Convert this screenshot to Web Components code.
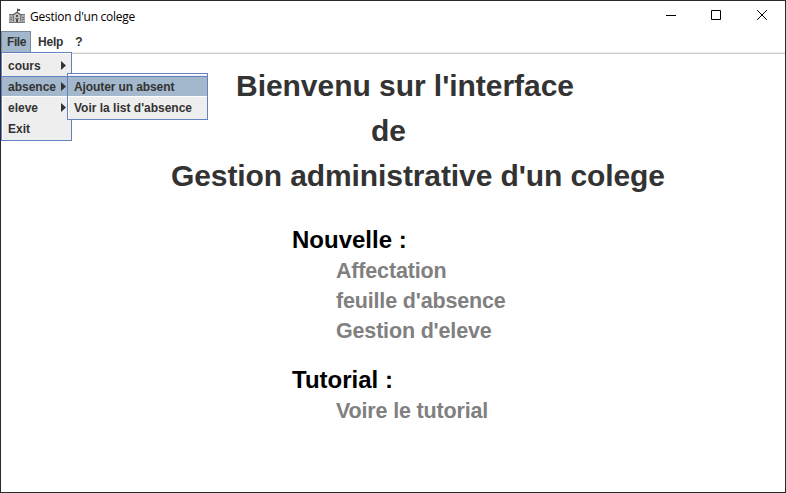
<!DOCTYPE html>
<html lang="fr"><head><meta charset="utf-8"><title>Gestion d'un colege</title>
<style>html,body{margin:0;width:786px;height:493px;overflow:hidden;background:#fff}</style></head>
<body><college-window></college-window>
<script>
const define = (name, html) => customElements.define(name, class extends HTMLElement {
  constructor(){ super(); this.attachShadow({mode:'open'}).innerHTML = html; }
});
define('title-bar', `<style>
:host{display:flex;height:30px;align-items:center;color:#000;font:12px/16px "Open Sans","Noto Sans",sans-serif}
.logo{margin:0 5px 0 8px;width:16px;height:16px}
.name{flex:1;letter-spacing:-.26px;white-space:nowrap;padding-top:1px}
.btn{width:46px;height:30px;display:block;position:relative;left:1px}
</style>
<svg class="logo" viewBox="0 0 16 16">
<path d="M0 7h4v7H0zM12 7h4v7h-4z" fill="#a8a8a8"/>
<path d="M4 7l4-2.6L12 7v7H4z" fill="#c4c4c4"/>
<path d="M0 6.5h4M12 6.5h4" stroke="#777"/>
<path d="M3.5 7.2L8 4.3l4.500 2.900" fill="none" stroke="#5a5a5a" stroke-width="1.2"/>
<path d="M8.500 0.500v4" stroke="#555"/><path d="M9 1h2v2H9z" fill="#555"/>
<path d="M4.500 7.500v6M11.500 7.500v6" stroke="#777"/>
<path d="M1 9.500h2M1 11.500h2M13 9.500h2M13 11.500h2M6 10.500h4" stroke="#777"/>
<path d="M7 7h2v2H7zM7 11h2v3H7z" fill="#505050"/>
<path d="M0 14.500h16" stroke="#777"/>
</svg><span class="name"><slot></slot></span>
<svg class="btn" viewBox="0 0 46 30"><path d="M18 14.500h10" stroke="#000"/></svg>
<svg class="btn" viewBox="0 0 46 30"><path d="M17.500 9.500h9v9h-9z" fill="none" stroke="#000"/></svg>
<svg class="btn" viewBox="0 0 46 30"><path d="M17.200 9.200l9.600 9.600M26.800 9.200l-9.600 9.600" stroke="#000"/></svg>`);
define('menu-tab', `<style>
:host{display:block;box-sizing:border-box;height:22px;padding:0 4px 0 6px;line-height:21px;letter-spacing:-.2px;border:1px solid transparent;border-bottom:0;white-space:nowrap}
:host([open]){width:30px;padding:0 0 0 5px;letter-spacing:-.4px;background:#a3b8cc;border-color:#7a8a99}
</style><slot></slot>`);
define('menu-bar', `<style>
:host{display:flex;box-sizing:border-box;height:23px;background:linear-gradient(#fff 21px,#eee 21px);border-bottom:1px solid #ccc;color:#333;font:bold 12px "Liberation Sans",Arial,sans-serif}
</style><slot></slot>`);
define('menu-item', `<style>
:host{display:flex;box-sizing:border-box;height:21px;padding:0 5px 0 6px;justify-content:space-between;border-top:1px solid transparent;border-bottom:1px solid transparent;line-height:20px;white-space:nowrap}
:host([active]){background:#a3b8cc;border-top-color:#6382bf;border-bottom-color:#fff}
svg{display:none;width:5px;height:9px;margin-top:5px}:host([sub]) svg{display:block}
</style><span><slot></slot></span><svg viewBox="0 0 5 9"><path d="M0 0v9l5-4.500z" fill="#333"/></svg>`);
define('popup-menu', `<style>
:host{display:block;position:absolute;box-sizing:border-box;background:#eee;border:1px solid #6382bf;box-shadow:inset 1px 1px #fff;color:#333;font:bold 12px "Liberation Sans",Arial,sans-serif;padding:2px 0 1px}
</style><slot></slot>`);
define('news-group', `<style>
:host{display:block;font:bold 21.5px/30px "Liberation Sans",Arial,sans-serif;letter-spacing:-.17px;color:#808080}
h2{margin:0 0 1px;font:bold 24px/30px "Liberation Sans",Arial,sans-serif;letter-spacing:0;color:#000}
.list{padding-left:44px}
</style><h2><slot name="title"></slot></h2><div class="list"><slot></slot></div>`);
define('college-window', `<style>
:host{display:block;box-sizing:border-box;position:relative;width:786px;height:493px;border:1px solid #2b2b2b;background:#fff}
.file{left:0;top:51px;width:71px;height:89px}
.absence{left:66px;top:72px;width:141px;height:47px}
.absence menu-item[active]{letter-spacing:-.1px}
main{display:flex;flex-direction:column;padding:9px 0 0 291px}
h1{display:grid;margin:0 0 27px -291px;font:bold 30px/45px "Liberation Sans",Arial,sans-serif;letter-spacing:-.1px;color:#333;white-space:nowrap}
.a{padding-left:235px;letter-spacing:-.04px}.b{padding-left:370px}.c{padding-left:170px}
news-group+news-group{margin-top:19px}
</style>
<title-bar>Gestion d'un colege</title-bar>
<menu-bar><menu-tab open>File</menu-tab><menu-tab>Help</menu-tab><menu-tab>?</menu-tab></menu-bar>
<main><h1><span class="a">Bienvenu sur l'interface</span><span class="b">de</span><span class="c">Gestion administrative d'un colege</span></h1>
<news-group><span slot="title">Nouvelle :</span><div>Affectation</div><div>feuille d'absence</div><div>Gestion d'eleve</div></news-group>
<news-group><span slot="title">Tutorial :</span><div>Voire le tutorial</div></news-group></main>
<popup-menu class="file"><menu-item sub>cours</menu-item><menu-item sub active>absence</menu-item><menu-item sub>eleve</menu-item><menu-item>Exit</menu-item></popup-menu>
<popup-menu class="absence"><menu-item active>Ajouter un absent</menu-item><menu-item>Voir la list d'absence</menu-item></popup-menu>`);
</script></body></html>
